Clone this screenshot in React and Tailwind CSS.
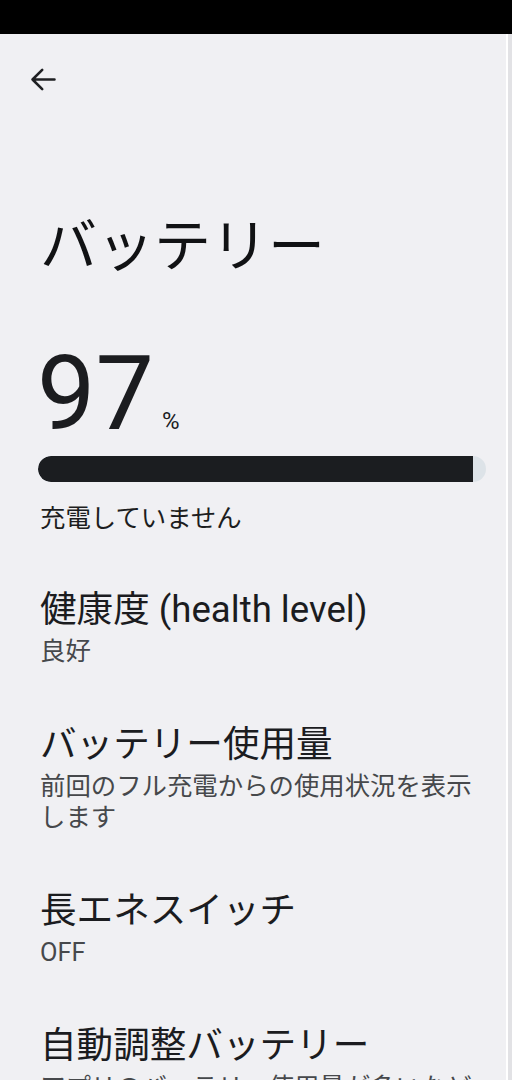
const font = {
  fontFamily: "Roboto, 'Noto Sans CJK JP', 'Noto Sans', sans-serif",
};

const items = [
  { title: '健康度 (health level)', sub: ['良好'] },
  { title: 'バッテリー使用量', sub: ['前回のフル充電からの使用状況を表示', 'します'] },
  { title: '長エネスイッチ', sub: ['OFF'] },
  { title: '自動調整バッテリー', sub: ['アプリのバッテリー使用量が多いなど'] },
];

function SettingItem({ title, sub }) {
  return (
    <div className="mb-[56px]">
      <div className="text-[36.6px] leading-[44px] text-[#1b1c1f]">{title}</div>
      <div className="mt-[4px] text-[25.4px] leading-[31px] text-[#46484b]">
        {sub.map((line) => (
          <div key={line}>{line}</div>
        ))}
      </div>
    </div>
  );
}

export default function App() {
  const level = 97;

  return (
    <div className="h-[1080px] w-[512px] overflow-hidden bg-[#f0f0f3]" style={font}>
      <div className="h-[34px] bg-black" />
      <div className="flex h-[1046px]">
        <div className="flex-1 pl-10">
          <div className="h-[90px] pt-[30px] -ml-[12px]">
            <svg
              width="31"
              height="31"
              viewBox="0 0 24 24"
              fill="none"
              stroke="#1f2023"
              strokeWidth="2"
              strokeLinecap="round"
              strokeLinejoin="round"
            >
              <path d="M20.5 12H3.5M11 4.5L3.5 12l7.5 7.5" />
            </svg>
          </div>

          <h1 className="mt-[91px] text-[57px] leading-[64px] text-[#111214]">バッテリー</h1>

          <div className="mt-[63px] flex items-baseline text-[#1b1c1f]">
            <span className="text-[104px] leading-[104px] -ml-[3px]">{level}</span>
            <span className="ml-[8px] text-[24px] leading-none">%</span>
          </div>

          <div className="mt-[10px] -ml-[2px] h-[26px] w-[448px] overflow-hidden rounded-full bg-[#dde3e8]">
            <div className="h-full rounded-l-full bg-[#1b1d20]" style={{ width: `${level}%` }} />
          </div>

          <div className="mt-[20px] text-[25.4px] leading-[32px] text-[#1c1d20]">充電していません</div>

          <div className="mt-[54px]">
            {items.map((item) => (
              <SettingItem key={item.title} {...item} />
            ))}
          </div>
        </div>
        <div className="w-[6px] border-l-2 border-white bg-[#e2e2e5]" />
      </div>
    </div>
  );
}
